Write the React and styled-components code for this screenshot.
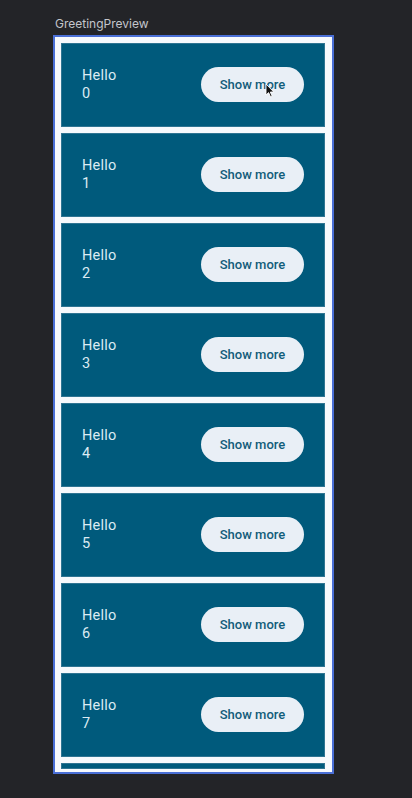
import React from "react";
import styled, { createGlobalStyle } from "styled-components";

const Global = createGlobalStyle`
  html, body { margin: 0; padding: 0; background: #232428; }
  body { width: 412px; height: 798px; overflow: hidden; }
`;

const Page = styled.div`
  width: 412px;
  height: 798px;
  background: #232428;
  padding: 16px 0 0 53px;
  box-sizing: border-box;
  display: flex;
  flex-direction: column;
`;

const Label = styled.div`
  font-family: Inter, "Noto Sans", sans-serif;
  font-size: 12px;
  line-height: 15px;
  color: #c4c6cc;
  padding-left: 2px;
  height: 19px;
`;

const Frame = styled.div`
  width: 281px;
  height: 739px;
  box-sizing: border-box;
  border: 2px solid #4a6fd6;
  background: #f7f9fc;
  padding: 0 7px 3px 6px;
  display: flex;
  flex-direction: column;
`;

const Viewport = styled.div`
  flex: 1;
  overflow: hidden;
  display: flex;
  flex-direction: column;
  gap: 6px;
  padding-top: 6px;
`;

const Card = styled.div`
  flex: none;
  height: ${(p) => (p.$peek ? "6px" : "84px")};
  box-sizing: border-box;
  background: #005a7c;
  border: 1px solid #2f7492;
  display: flex;
  align-items: center;
  justify-content: space-between;
  padding: 0 20px 0 20px;
`;

const Greeting = styled.div`
  font-family: Roboto, "Noto Sans", sans-serif;
  font-size: 14.5px;
  line-height: 18px;
  color: #dcebf3;
  letter-spacing: 0.2px;
`;

const Button = styled.button`
  width: 103px;
  height: 35px;
  border: none;
  border-radius: 18px;
  background: #e9eff6;
  color: #125c7a;
  font-family: Roboto, "Noto Sans", sans-serif;
  font-size: 13px;
  font-weight: 500;
  padding: 0;
  margin-top: -1px;
  cursor: pointer;
`;

const Cursor = () => (
  <svg width="10" height="16" viewBox="0 0 10 16" style={{ position: "absolute", left: 265, top: 83 }}>
    <path d="M1 1 L1 12 L3.6 9.6 L5.6 14 L7.2 13.3 L5.3 9 L8.8 9 Z" fill="#111" stroke="#fff" strokeWidth="0.9" />
  </svg>
);

export default function App() {
  const items = [0, 1, 2, 3, 4, 5, 6, 7];
  return (
    <>
      <Global />
      <Page>
        <Label>GreetingPreview</Label>
        <Frame>
          <Viewport>
            {items.map((i) => (
              <Card key={i}>
                <Greeting>
                  Hello
                  <br />
                  {i}
                </Greeting>
                <Button>Show more</Button>
              </Card>
            ))}
            <Card $peek />
          </Viewport>
        </Frame>
      </Page>
      <Cursor />
    </>
  );
}
